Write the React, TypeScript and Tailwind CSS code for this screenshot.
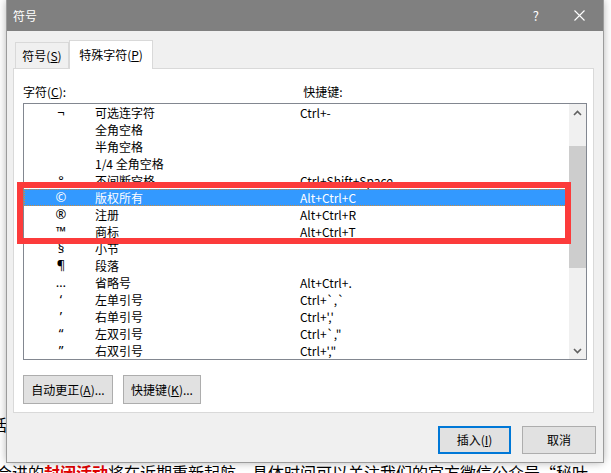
import React from "react";

const FONT = { fontFamily: '"Noto Sans CJK SC", "Noto Sans", sans-serif' };

const rows: [string, string, string][] = [
  ["¬", "可选连字符", "Ctrl+-"],
  ["", "全角空格", ""],
  ["", "半角空格", ""],
  ["", "1/4 全角空格", ""],
  ["°", "不间断空格", "Ctrl+Shift+Space"],
  ["©", "版权所有", "Alt+Ctrl+C"],
  ["®", "注册", "Alt+Ctrl+R"],
  ["™", "商标", "Alt+Ctrl+T"],
  ["§", "小节", ""],
  ["¶", "段落", ""],
  ["…", "省略号", "Alt+Ctrl+."],
  ["‘", "左单引号", "Ctrl+`,`"],
  ["’", "右单引号", "Ctrl+','"],
  ["“", "左双引号", 'Ctrl+`,"'],
  ["”", "右双引号", "Ctrl+',\""],
];

function Chevron({ up }: { up: boolean }) {
  return (
    <svg width="9" height="6" viewBox="0 0 9 6">
      <polyline
        points={up ? "1,5 4.5,1.5 8,5" : "1,1 4.5,4.5 8,1"}
        fill="none"
        stroke="#606060"
        strokeWidth="1.6"
      />
    </svg>
  );
}

export default function App() {
  return (
    <div className="relative w-[611px] h-[473px] overflow-hidden bg-white text-black" style={FONT}>
      {/* background document text */}
      <div className="absolute left-[-9px] top-[414px] text-[16px] leading-[20px] text-black">话</div>
      <div className="absolute left-[-4px] top-[462px] whitespace-nowrap text-[16px] leading-[20px] text-black">
        会进的<span className="font-bold text-[#e00000]">封闭活动</span>将在近期重新起航，具体时间可以关注我们的官方微信公众号“秘叶
      </div>

      {/* dialog window */}
      <div className="absolute left-[7px] top-0 w-[596px] h-[462px] flex flex-col bg-[#f0f0f0] shadow-[0_0_0_1px_#9c9c9c,0_0_9px_rgba(0,0,0,0.35)]">
        {/* title bar */}
        <div className="h-[31px] shrink-0 flex items-center bg-[#808080] text-white">
          <span className="pl-[6px] text-[12px] leading-[16px]">符号</span>
          <span className="ml-auto mr-[35px] text-[13px] leading-[16px]">?</span>
          <svg width="11" height="11" viewBox="0 0 11 11" className="mr-[18px]">
            <path d="M0.5 0.5 L10.5 10.5 M10.5 0.5 L0.5 10.5" stroke="white" strokeWidth="1.1" />
          </svg>
        </div>

        {/* tabs */}
        <div className="flex items-end ml-[8px] mt-[9px] h-[28px] text-[12px]">
          <div className="w-[54px] h-[26px] flex items-center justify-center border border-b-0 border-[#d9d9d9] bg-[#f0f0f0]">
            符号(<span className="underline">S</span>)
          </div>
          <div className="relative z-10 -mb-px w-[84px] h-[29px] flex items-center justify-center border border-b-0 border-[#d9d9d9] bg-white">
            特殊字符(<span className="underline">P</span>)
          </div>
        </div>

        {/* tab page */}
        <div className="relative ml-[6px] w-[581px] h-[345px] border border-[#d9d9d9] bg-white flex flex-col px-[9px] pt-[13px]">
          <div className="flex h-[20px] items-center text-[12px] leading-[16px]">
            <span>字符(<span className="underline">C</span>):</span>
            <span className="ml-[237px]">快捷键:</span>
          </div>

          {/* list box */}
          <div className="mt-[1px] w-[564px] h-[257px] border border-[#828790] bg-white flex text-[12px]">
            <div className="flex-1 flex flex-col">
              {rows.map(([sym, name, key], i) => {
                const sel = i === 5;
                return (
                  <div
                    key={i}
                    className={
                      "h-[17px] shrink-0 flex items-center leading-[17px] whitespace-nowrap " +
                      (sel ? "bg-[#3399ff] text-white outline-1 outline-dotted outline-[#d08a3a] -outline-offset-1" : "")
                    }
                  >
                    <span className="ml-[27px] w-[20px] text-center font-['Noto_Sans',sans-serif] text-[13px]">{sym}</span>
                    <span className="ml-[24px] w-[205px]">{name}</span>
                    <span>{key}</span>
                  </div>
                );
              })}
            </div>
            {/* scrollbar */}
            <div className="w-[17px] bg-[#f0f0f0] flex flex-col">
              <div className="h-[17px] flex items-center justify-center">
                <Chevron up />
              </div>
              <div className="flex-1 flex flex-col">
                <div className="mt-[25px] h-[122px] bg-[#cdcdcd]" />
              </div>
              <div className="h-[17px] flex items-center justify-center">
                <Chevron up={false} />
              </div>
            </div>
          </div>

          {/* buttons */}
          <div className="mt-[15px] flex gap-[10px] text-[12px]">
            <button className="w-[90px] h-[29px] border border-[#adadad] bg-[#e1e1e1]">
              自动更正(<span className="underline">A</span>)...
            </button>
            <button className="w-[78px] h-[29px] border border-[#adadad] bg-[#e1e1e1]">
              快捷键(<span className="underline">K</span>)...
            </button>
          </div>

          {/* red annotation rectangle */}
          <div className="absolute left-[3px] top-[113px] w-[554px] h-[62px] border-[6px] border-[#fc3b3b] pointer-events-none" />
        </div>

        {/* bottom buttons */}
        <div className="mt-[13px] flex justify-end gap-[11px] pr-[7px] text-[12px]">
          <button className="w-[73px] h-[28px] border-2 border-[#0078d7] bg-[#e1e1e1]">
            插入(<span className="underline">I</span>)
          </button>
          <button className="w-[74px] h-[28px] border border-[#adadad] bg-[#e1e1e1]">取消</button>
        </div>
      </div>
    </div>
  );
}
